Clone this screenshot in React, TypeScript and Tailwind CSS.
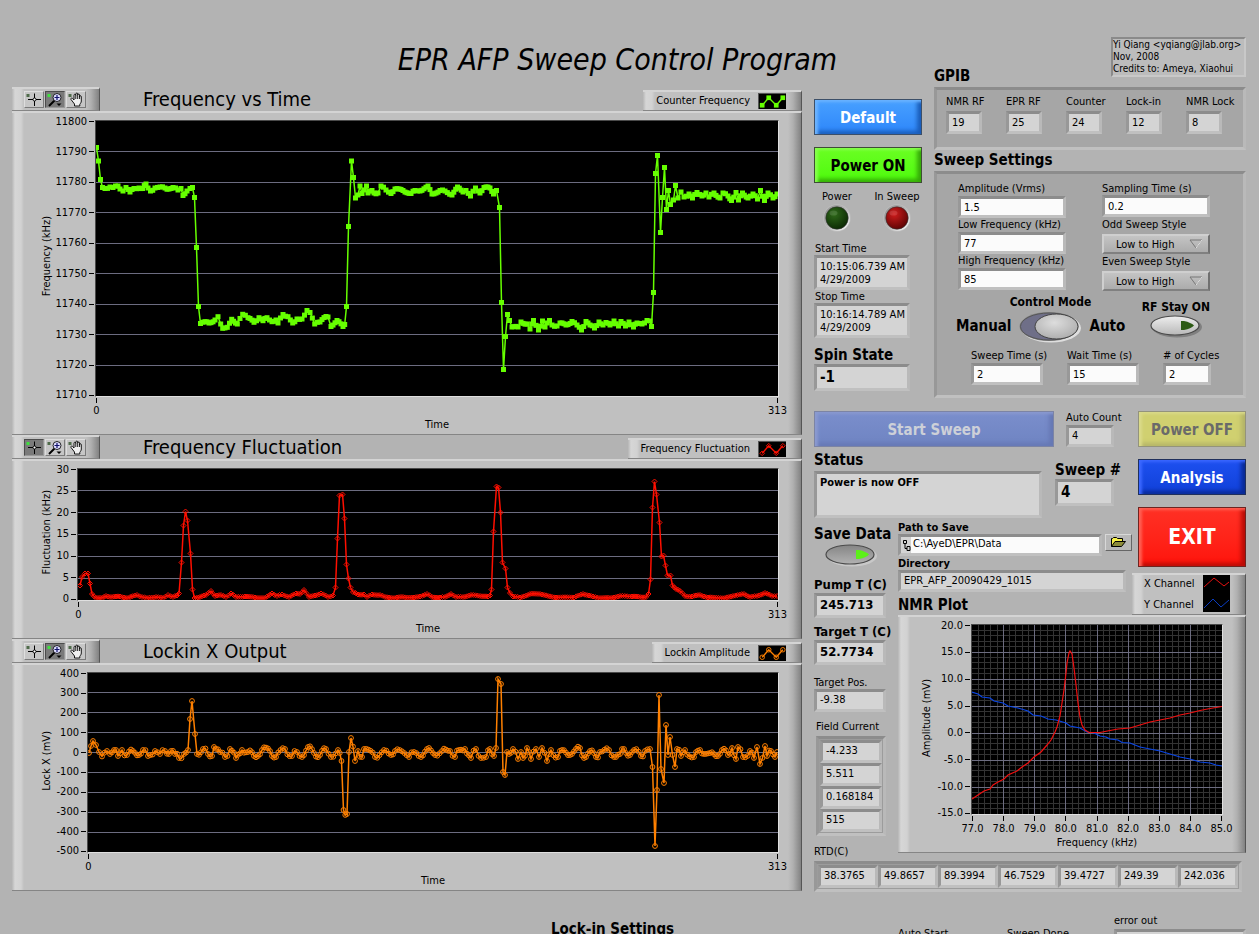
import { useId } from "react";
import type { ReactNode } from "react";

type Point = [number, number];
type Marker = "square" | "diamond" | "circle" | "none";

const parse = (s: string): Point[] =>
  s
    .trim()
    .split(/\s+/)
    .map((p) => p.split(",").map(Number) as Point);

// Fills long steps with extra samples so the trace has a constant sample rate
const resample = (points: Point[], jitter: number): Point[] => {
  const out: Point[] = [points[0]];
  for (let i = 1; i < points.length; i++) {
    const [x0, y0] = points[i - 1];
    const [x1, y1] = points[i];
    const steps = Math.max(1, Math.round((x1 - x0) / 2.2));
    for (let k = 1; k <= steps; k++) {
      const t = k / steps;
      const noise = k < steps ? Math.sin((x0 + k) * 12.9898) * jitter : 0;
      out.push([x0 + (x1 - x0) * t, y0 + (y1 - y0) * t + noise]);
    }
  }
  return out;
};

const FREQUENCY = parse(`
  96.5,147.5 98.5,161 100.5,179.5 102.5,187.5 105,188.5 110,187 113,187.5 118,186 120,189 123,191 126,187.5 130,192
  134,188.5 139,188 142.5,188.5 146,184 148,188 150.5,191 155,188 160,187 165,188 169,189 173,187.5 178,190 181,188.5
  183,195.5 187,191 190,188.5 192.5,187.5 194.5,197.5 196.5,247.5 198.5,306.5 200.5,323.5 205,321.7 209,323 215,320
  218,316.7 220.7,324 222.7,328.3 227.3,327.3 231.7,319.3 237.3,324 242.7,314.3 248,317.7 254,322.3 259,317.7 263,320.7
  267,317.7 272,321.7 276,320 278,323 283,314.5 288,316.7 292.7,323 297,319 302,319 307,310.5 310,312.5 314.7,324
  320,322 326,316.5 328,317 331,326.5 337,320.5 343,326.5 344.7,324.5 346.5,306.5 348.5,226.5 351.5,161 353.5,177.5
  355.5,198 358,195 360,186 362,193.5 366.5,186 368,193 372,190.5 374,193 378,193 381,186 386,190 391,193.5 395,189
  403,190.5 411,193.5 415,190.5 420,191 428,186 432,194 440,190.5 445,191 452,195 457.5,187 463,192 466,190.5
  470.5,196 475.5,188 480,193 484,187.5 490,188 493.5,194 496.5,190.5 499.5,207.5 501.5,302.5 503.5,369.5 505.5,336.5
  507.5,314.5 509.5,320.5 512,327 518,327 521,322 527,324 530,329 533.5,320.5 538.5,330 542.5,321 545,327 549.5,320.5
  552,325 557,326 560,323 566,325 572,321.5 577,325 581.5,330 586,321.5 590,325 594.5,328 599,322 603,325 606,322.5
  610,325 614,321 618.5,326 621,321.5 625.5,326 629,322 633.5,327 637,323 642,324 647,320.5 650,321 651.5,326.5
  653.5,292.5 655.5,173.5 657.5,155.5 660.5,232.5 662.5,197.5 664.5,167.5 666.5,209.5 668.5,190.5 670.5,204.5 673.5,200
  675.5,185.5 678,198 681,192 684,197 689,194 692.5,198 697,192.5 702,196 706,193 709,197 714,193 720,198 723,193
  728,196 731.5,200.5 736,192.5 738.5,200 742.5,193 748,198 753,194 757.5,199 760.5,190.5 764.5,200.5 768,193 773,198 777,194
`);

const FLUCTUATION = parse(`
  80,585.5 82,577 85,573.5 88,573.5 90,583.5 92,594 96,598 102,598 106,596 112,597 120,596.5 128,598 137,595 142,597
  147,598 156,597 163,598 168,595 173,597 177,595.5 179,593.5 181.5,562.5 183.5,525.5 185.5,511.5 187.5,520.5
  190.5,553.5 192.5,589.5 194.5,598 200,597 206,595 211,591 215,596 221,595 226,597 231,593.5 236,597 245,596.5
  255,597.5 265,598 272,593.5 277,596 282,594.5 289,597 296,593.5 300,594 304,590 309,597 315,595.5 321,593.5 328,597
  333,595.5 335.5,587.5 337.5,538.5 339.5,495.5 342.5,494.5 344.5,518.5 346.5,564.5 348.5,578.5 350.5,587.5 353,592
  358,594.5 364,594.5 367,597 372,594.5 380,595 385,597 395,598 403,597 414,597.5 420,596.5 427,594 432,597 440,597.5
  445,597 451,594 456,597 463,597 471,595 480,596 488,596.5 490,595.5 491.5,589.5 493.5,531.5 496.5,486.5 498.5,487.5
  500.5,512.5 502.5,562.5 505.5,568.5 507.5,587.5 510,593 513,596.5 520,597.5 530,594 540,594 548,596 556,597.5
  574,597.5 583,594 593,596.5 600,598 610,598 620,596 632,596.5 640,597 646,597 648.5,594 650.5,579.5 652.5,507.5
  654.5,481.5 656.5,494.5 659.5,522.5 661.5,556.5 663.5,555.5 665.5,565.5 667.5,575.5 670.5,575.5 672.5,585.5 676,589
  680,591 685,596 692,596.5 700,595 708,597.5 725,598 733,596 744,594 750,597 757,596 765,593 772,596 777,596
`);

const LOCKIN = parse(`
  89,753 91,746 93,741 96,745 99,752 102,756.5 107,751 110,754 114,750 118,756 122,750 127,755 133,751 139,755 143,750
  148,756 155,751 160,754 165,751 171,751 175,754 179,758 184,754 188,750 190,719 192,701 195,734 197,754 203,749
  208,754 212,756 214,747 220,752 225,757 230,749 236,758 242,750 248,752 254,756 262,750 270,751 276,757 285,749
  292,756 297,752 302,757 308,747 314,753 320,755 326,749 331,757 338,750 341.5,761 343.5,810 347,814 349,752 351,738
  355,761 358,751 362,757 364,749 375,757 384,750 391,755 395,751 409,757 414,752 421,757 427,749 435,755 442,751
  450,751 455,757 459,750 465,749 471,758 476,749 481,758 486,757 490,749 494,756 496,748 498,679 501,684 503,772
  505,775 507,752 513,749 518,759 521,752 523,758 527,748 531,759 536,749 539,757 542,748 547,761 551,750 558,757
  562,750 570,755 580,748 584,758 590,751 596,757 600,752 609,750 614,757 620,754 624,749 630,755 634,750 641,756
  645,751 650,749 652.5,767 655,846 657,790 659,695 661,769 664,783 666,725 668,755 670,737 675,767 677,749 681,756
  685,750 694,757 700,750 710,753 718,756 722,750 728,755 732,748 736,759 738,747 743,757 750,751 754,758 757,747
  760,764 765,746 767,756 771,751 775,757 777,752
`);

const NMR_X = parse(`
  972,799 978,795 984,791 990,789 993,785 998,782 1004,779 1008,775 1017,771 1022,767 1028,763 1034,757 1041,752
  1047,745 1051,740 1055,732 1057,727 1060,716 1062,703 1064,690 1066,673 1067,663 1069,653 1070,651 1072,654
  1074,668 1076,685 1078,703 1080,717 1082,725 1085,730 1089,732.5 1100,732.5 1110,730.5 1118,729 1130,728 1140,725
  1150,722 1160,720 1170,718 1180,715 1190,713 1200,710.5 1210,708.5 1222,706.5
`);

const NMR_Y = parse(`
  972,692 978,694 982,697 990,698 994,701 1003,703 1008,706 1018,708 1028,711 1033,715 1041,716 1048,719 1056,720
  1066,723 1070,726 1080,728 1087,732 1094,733 1100,736 1106,737 1110,739 1118,740 1122,742.5 1130,743 1140,747
  1150,749 1160,751 1170,754 1180,757 1190,759 1200,762 1210,763 1216,765 1222,766
`);

const BEVEL =
  "border-t-2 border-r border-b border-t-[#d4d4d4] border-r-[#555] border-b-[#858585] bg-[linear-gradient(to_right,#b6b6b6,#d6d6d6_3px,#d2d2d2_9px,#c0c0c0_12px,#c0c0c0_calc(100%_-_13px),#b0b0b0_calc(100%_-_8px),#828282)]";
const SUNKEN =
  "border-[3px] border-t-[#8c8c8c] border-l-[#989898] border-r-[#b9b9b9] border-b-[#c0c0c0]";

function Trace({ points, color, marker }: { points: Point[]; color: string; marker: Marker }) {
  return (
    <g fill="none" stroke={color}>
      <polyline points={points.map((p) => p.join(",")).join(" ")} strokeWidth={marker === "none" ? 1.2 : 1.5} />
      {points.map(([x, y], i) => {
        if (marker === "square") return <rect key={i} x={x - 2.5} y={y - 2.5} width={5} height={5} fill={color} stroke="none" />;
        if (marker === "diamond") return <path key={i} d={`M${x - 2.5} ${y}l2.500 -2.500l2.500 2.500l-2.500 2.500z`} strokeWidth={1} />;
        if (marker === "circle") return <circle key={i} cx={x} cy={y} r={2.4} strokeWidth={1} />;
        return null;
      })}
    </g>
  );
}

function Chart({
  box,
  height,
  axis,
  labelGap,
  yLabel,
  yTicks,
  xLabel,
  xTicks,
  fineGrid = false,
  children,
}: {
  box: [number, number, number, number];
  height: string;
  axis: string;
  labelGap: string;
  yLabel: string;
  yTicks: string[];
  xLabel: string;
  xTicks: string[];
  fineGrid?: boolean;
  children: ReactNode;
}) {
  const [x, y, w, h] = box;
  const rows = yTicks.length - 1;
  const cols = xTicks.length - 1;
  const line = (n: number, total: number) => Array.from({ length: total - 1 }, (_, i) => ((i + 1) * n) / total);
  return (
    <div className={`${BEVEL} flex pt-[7px] pr-[22px] pb-[3px]`}>
      <div className={`${labelGap} flex w-3 shrink-0 items-center justify-center pb-[38px]`}>
        <span className="rotate-180 whitespace-nowrap leading-3 [writing-mode:vertical-rl]">{yLabel}</span>
      </div>
      <div className={`${axis} ${height} flex shrink-0 flex-col justify-between py-px`}>
        {yTicks.map((t) => (
          <div key={t} className="flex h-px items-center justify-end gap-0.5 pr-px leading-3">
            <span>{t}</span>
            <span className="h-px w-[5px] bg-black" />
          </div>
        ))}
      </div>
      <div className="min-w-0 flex-1">
        <div className={`${height} border border-t-[#4a4a4a] border-r-[#e0e0e0] border-b-[#e0e0e0] border-l-[#4a4a4a] bg-black`}>
          <svg viewBox={box.join(" ")} preserveAspectRatio="none" className="block h-full w-full">
            {fineGrid && (
              <g stroke="#333" shapeRendering="crispEdges">
                {line(h, rows * 5).map((v) => (
                  <line key={`r${v}`} x1={x} x2={x + w} y1={y + v} y2={y + v} />
                ))}
                {line(w, cols * 5).map((v) => (
                  <line key={`c${v}`} x1={x + v} x2={x + v} y1={y} y2={y + h} />
                ))}
              </g>
            )}
            <g stroke="#6c6c80" shapeRendering="crispEdges">
              {line(h, rows).map((v) => (
                <line key={`r${v}`} x1={x} x2={x + w} y1={y + v} y2={y + v} />
              ))}
              {fineGrid && line(w, cols).map((v) => <line key={`c${v}`} x1={x + v} x2={x + v} y1={y} y2={y + h} />)}
            </g>
            {children}
          </svg>
        </div>
        <div className="mx-px mt-px flex justify-between">
          {xTicks.map((t) => (
            <div key={t} className="flex w-px flex-col items-center">
              <span className="h-[5px] w-px bg-black" />
              <span className="mt-0.5 leading-3">{t}</span>
            </div>
          ))}
        </div>
        <div className="mt-0.5 text-center leading-3">{xLabel}</div>
      </div>
    </div>
  );
}

function ToolButton({ name, active, children }: { name: string; active?: boolean; children: ReactNode }) {
  return (
    <button
      type="button"
      aria-label={name}
      className={
        active
          ? "h-[17px] w-5 border border-t-[#4c4c4c] border-l-[#4c4c4c] border-r-[#999] border-b-[#999] bg-[#7a7a7a]"
          : "h-[17px] w-5 border border-t-[#dedede] border-l-[#dedede] border-r-[#7a7a7a] border-b-[#7a7a7a] bg-[#c6c6c6]"
      }
    >
      <svg viewBox="0 0 18 15" className="block h-[15px] w-[18px]">
        <rect x="1.500" y="2" width="3" height="3" fill={active ? "#3fe03f" : "#4f6b4a"} />
        {children}
      </svg>
    </button>
  );
}

function ToolPalette({ active }: { active: "cursor" | "zoom" }) {
  return (
    <div className={`${BEVEL} flex h-6 w-[88px] gap-px pt-0.5 pl-3`}>
      <ToolButton name="Cursor" active={active === "cursor"}>
        <path d="M3 7.500h5M11 7.500h5M9.500 1.500v4.500M9.500 9v5" stroke="#000" />
        <circle cx="9.500" cy="7.500" r="1.500" fill="#fff" stroke="#000" />
      </ToolButton>
      <ToolButton name="Zoom" active={active === "zoom"}>
        <path d="M8.500 8.500L3 14" stroke="#000" strokeWidth="2" />
        <circle cx="11" cy="5.500" r="4" fill="#dcdcff" stroke="#222" />
        <path d="M11 3v5M8.500 5.500h5" stroke="#10106a" strokeWidth="1.200" />
        <path d="M10.500 11.500h5l-2.500 2.500z" fill="#000" />
      </ToolButton>
      <ToolButton name="Pan" active={false}>
        <path
          d="M7.500 14v-2L4 7.500c-.7-1 .8-2 1.700-1L7 8V3.200c0-1.300 1.800-1.300 1.800 0V2c0-1.200 1.900-1.200 1.900 0v1c0-1.200 1.900-1.200 1.900 0v1.600c0-1.100 1.700-1.100 1.700 0V9c0 1.500-.8 2.300-1.500 3.300V14z"
          fill="#f0f0f0"
          stroke="#000"
          strokeWidth=".9"
        />
        <path d="M8.800 3v4M10.700 3v4M12.600 4v3" stroke="#000" strokeWidth=".9" />
      </ToolButton>
    </div>
  );
}

function GraphHeader({ title, active, legend, children }: { title: string; active: "cursor" | "zoom"; legend: string; children: ReactNode }) {
  return (
    <div className="flex h-6 items-end">
      <ToolPalette active={active} />
      <h2 className="ml-[43px] flex-1 self-center text-[20px] leading-6">{title}</h2>
      <div className={`${BEVEL} flex h-[21px] items-center gap-2 pr-[15px] pl-[13px]`}>
        <span className="leading-3">{legend}</span>
        <svg viewBox="0 0 28 16" className="h-4 w-7 border-t border-l border-[#555] bg-black">
          {children}
        </svg>
      </div>
    </div>
  );
}

const SWATCH: Point[] = [[3, 12], [10, 4], [18, 12], [25, 4]];

function Field({
  label,
  value,
  width,
  size = "h-[22px]",
  labelClass = "leading-[13px]",
  gap = "mt-px",
}: {
  label: string;
  value: string;
  width: string;
  size?: string;
  labelClass?: string;
  gap?: string;
}) {
  const id = useId();
  return (
    <div className={width}>
      <label htmlFor={id} className={`block whitespace-nowrap ${labelClass}`}>
        {label}
      </label>
      <input id={id} defaultValue={value} className={`${SUNKEN} ${size} ${gap} block w-full bg-[#fbfbfb] px-[3px] pt-px outline-none`} />
    </div>
  );
}

function Readout({
  label,
  value,
  width,
  size = "h-[22px]",
  labelClass = "leading-[13px]",
  valueClass = "items-center px-[3px] pt-px",
  gap = "",
}: {
  label: string;
  value: ReactNode;
  width: string;
  size?: string;
  labelClass?: string;
  valueClass?: string;
  gap?: string;
}) {
  const id = useId();
  return (
    <div className={width}>
      <label htmlFor={id} className={`block whitespace-nowrap ${labelClass}`}>
        {label}
      </label>
      <output id={id} className={`${SUNKEN} ${size} ${gap} ${valueClass} flex bg-[#d4d4d4]`}>
        {value}
      </output>
    </div>
  );
}

function Combo({ label }: { label: string }) {
  const id = useId();
  return (
    <div>
      <label htmlFor={id} className="block leading-[13px]">
        {label}
      </label>
      <div className="relative mt-[3px]">
        <select
          id={id}
          className="block h-5 w-full appearance-none border-2 border-t-[#cfcfcf] border-l-[#cfcfcf] border-r-[#707070] border-b-[#808080] bg-linear-to-b from-[#c4c4c4] to-[#acacac] pt-px pl-3 outline-none"
        >
          <option>Low to High</option>
          <option>High to Low</option>
        </select>
        <svg viewBox="0 0 14 10" className="pointer-events-none absolute top-[5px] right-[7px] h-2.5 w-3.5" fill="none">
          <path d="M1 1h12L7 9z" stroke="#777" />
          <path d="M13 1L7 9" stroke="#e8e8e8" />
        </svg>
      </div>
    </div>
  );
}

function PanelButton({ className, disabled, children }: { className: string; disabled?: boolean; children: ReactNode }) {
  return (
    <button type="button" disabled={disabled} className={`border pt-0.5 font-bold ${className}`}>
      {children}
    </button>
  );
}

function Led({ label, id, light, dark }: { label: string; id: string; light: string; dark: string }) {
  return (
    <div className="flex w-[46px] flex-col items-center">
      <span className="whitespace-nowrap leading-[13px]">{label}</span>
      <svg viewBox="0 0 28 28" className="mt-px h-7 w-7">
        <defs>
          <radialGradient id={id} cx=".38" cy=".32" r=".7">
            <stop offset="0" stopColor={light} />
            <stop offset="1" stopColor={dark} />
          </radialGradient>
          <linearGradient id={`${id}-rim`} x1="0" y1="0" x2="1" y2="1">
            <stop offset="0" stopColor="#8c8c8c" />
            <stop offset=".5" stopColor="#b8b8b8" />
            <stop offset="1" stopColor="#fff" />
          </linearGradient>
        </defs>
        <circle cx="14" cy="14" r="13.800" fill="#bdbdbd" />
        <circle cx="14" cy="14" r="13" fill={`url(#${id}-rim)`} />
        <circle cx="14" cy="14" r="11.200" fill={`url(#${id})`} stroke="#333" strokeWidth=".6" />
        <ellipse cx="10.500" cy="9" rx="4" ry="2.600" fill="#fff" opacity=".12" />
      </svg>
    </div>
  );
}

function OvalSwitch({ name, id, on }: { name: string; id: string; on: boolean }) {
  return (
    <button type="button" role="switch" aria-checked={on} aria-label={name} className="block h-6 w-[54px]">
      <svg viewBox="0 0 54 24" className="h-6 w-[54px]">
        <defs>
          <linearGradient id={id} x1="0" y1="0" x2="0" y2="1">
            <stop offset="0" stopColor={on ? "#858585" : "#eee"} />
            <stop offset="1" stopColor={on ? "#b2b2b2" : "#b8b8b8"} />
          </linearGradient>
        </defs>
        <ellipse cx="28" cy="13" rx="25" ry="10.500" fill={on ? "#c8c8c8" : "#808080"} />
        <ellipse cx="26" cy="11.500" rx="24" ry="9.500" fill={`url(#${id})`} stroke="#4a4a4a" strokeWidth="1.200" />
        <path d="M32 7h3q7 1.500 10 4.500q-3 3-10 4.500h-3z" fill={on ? "#5cf01a" : "#2c5a14"} />
      </svg>
    </button>
  );
}

function ModeSwitch() {
  return (
    <button type="button" role="switch" aria-checked="true" aria-label="Control Mode" className="block h-8 w-[62px]">
      <svg viewBox="0 0 62 32" className="h-8 w-[62px]">
        <defs>
          <radialGradient id="knob" cx=".45" cy=".35" r=".7">
            <stop offset="0" stopColor="#ddd" />
            <stop offset="1" stopColor="#ababab" />
          </radialGradient>
        </defs>
        <ellipse cx="32" cy="17" rx="30" ry="14.500" fill="#dedede" />
        <ellipse cx="30" cy="15.500" rx="29.500" ry="14.500" fill="#858585" />
        <ellipse cx="30" cy="15.500" rx="28.500" ry="13.500" fill="#6f6f88" stroke="#555" />
        <ellipse cx="37.500" cy="15.500" rx="21.500" ry="12.500" fill="url(#knob)" stroke="#444" />
      </svg>
    </button>
  );
}

const GPIB = [
  ["NMR RF", "19"],
  ["EPR RF", "25"],
  ["Counter", "24"],
  ["Lock-in", "12"],
  ["NMR Lock", "8"],
];
const FIELD_CURRENT = ["-4.233", "5.511", "0.168184", "515"];
const RTD = ["38.3765", "49.8657", "89.3994", "46.7529", "39.4727", "249.39", "242.036"];

function Graphs() {
  const green = "#66ff00";
  const red = "#ff0f00";
  const orange = "#ff8000";
  return (
    <section>
      <GraphHeader title="Frequency vs Time" active="zoom" legend="Counter Frequency">
        <Trace points={SWATCH} color={green} marker="square" />
      </GraphHeader>
      <Chart
        box={[96, 121, 682, 275]}
        height="h-[277px]"
        labelGap="ml-[29px]"
        axis="w-[42px]"
        yLabel="Frequency (kHz)"
        yTicks={["11800", "11790", "11780", "11770", "11760", "11750", "11740", "11730", "11720", "11710"]}
        xLabel="Time"
        xTicks={["0", "313"]}
      >
        <Trace points={resample(FREQUENCY, 0.8)} color={green} marker="square" />
      </Chart>
      <GraphHeader title="Frequency Fluctuation" active="cursor" legend="Frequency Fluctuation">
        <Trace points={SWATCH} color={red} marker="diamond" />
      </GraphHeader>
      <Chart
        box={[78, 469, 700, 131]}
        height="h-[133px]"
        labelGap="ml-[29px]"
        axis="w-6"
        yLabel="Fluctuation (kHz)"
        yTicks={["30", "25", "20", "15", "10", "5", "0"]}
        xLabel="Time"
        xTicks={["0", "313"]}
      >
        <Trace points={resample(FLUCTUATION, 0.3)} color={red} marker="diamond" />
      </Chart>
      <GraphHeader title="Lockin X Output" active="zoom" legend="Lockin Amplitude">
        <Trace points={SWATCH} color={orange} marker="circle" />
      </GraphHeader>
      <Chart
        box={[88, 673, 690, 179]}
        height="h-[181px]"
        labelGap="ml-[29px]"
        axis="w-[34px]"
        yLabel="Lock X (mV)"
        yTicks={["400", "300", "200", "100", "0", "-100", "-200", "-300", "-400", "-500"]}
        xLabel="Time"
        xTicks={["0", "313"]}
      >
        <Trace points={resample(LOCKIN, 3)} color={orange} marker="circle" />
      </Chart>
    </section>
  );
}

function Controls() {
  return (
    <div className="flex w-[108px] flex-col pt-3">
      <PanelButton className="h-9 border-[#3c4f68] bg-linear-to-b from-[#48a0ff] to-[#2d86fa] text-[15px] text-white shadow-[inset_3px_2px_3px_#6cb4ff,inset_-4px_-3px_4px_#1a5cb8]">
        Default
      </PanelButton>
      <PanelButton className="mt-3 h-9 border-[#3e4e34] bg-linear-to-b from-[#6aff22] to-[#4dfa0a] text-[15px] shadow-[inset_3px_2px_3px_#86ff4c,inset_-4px_-3px_4px_#35a808]">
        Power ON
      </PanelButton>
      <div className="mt-[7px] flex gap-3.5">
        <Led label="Power" id="led-power" light="#2f6a1a" dark="#0c2a04" />
        <Led label="In Sweep" id="led-sweep" light="#d01c1c" dark="#5e0404" />
      </div>
      <Readout
        label="Start Time"
        width="mt-2.5 w-24"
        size="h-[35px]"
        labelClass="pl-px leading-[13px]"
        valueClass="flex-col justify-center pl-[3px] leading-[13px] whitespace-nowrap"
        value={
          <>
            <span>10:15:06.739 AM</span>
            <span>4/29/2009</span>
          </>
        }
      />
      <Readout
        label="Stop Time"
        width="w-24"
        size="h-[35px]"
        labelClass="pl-px leading-[13px]"
        valueClass="flex-col justify-center pl-[3px] leading-[13px] whitespace-nowrap"
        value={
          <>
            <span>10:16:14.789 AM</span>
            <span>4/29/2009</span>
          </>
        }
      />
      <Readout
        label="Spin State"
        value="-1"
        width="mt-2 w-24"
        size="h-[27px]"
        labelClass="text-[15px] font-bold leading-[18px]"
        valueClass="items-center px-[3px] text-[15px] font-bold"
      />
    </div>
  );
}

function Settings() {
  return (
    <div className="-mt-5 min-w-0 flex-1">
      <h3 className="text-[15px] leading-[18px] font-bold">GPIB</h3>
      <div className={`${SUNKEN} mt-0.5 flex gap-3 bg-[#a6a6a6] px-[9px] pt-[5px] pb-[13px]`}>
        {GPIB.map(([label, value]) => (
          <div key={label} className="w-12">
            <Readout label={label} value={value} width="w-9" size="h-[23px]" gap="mt-[3px]" />
          </div>
        ))}
      </div>
      <h3 className="mt-px text-[15px] leading-[18px] font-bold">Sweep Settings</h3>
      <div className={`${SUNKEN} mt-0.5 bg-[#a6a6a6] pt-2 pb-[10px]`}>
        <div className="mr-[33px] ml-[21px] grid grid-cols-2 gap-x-9">
          <div>
            <Field label="Amplitude (Vrms)" value="1.5" width="w-full" />
            <Field label="Low Frequency (kHz)" value="77" width="w-full" />
            <Field label="High Frequency (kHz)" value="85" width="w-full" />
          </div>
          <div className="flex flex-col gap-px">
            <Field label="Sampling Time (s)" value="0.2" width="w-full" gap="" />
            <Combo label="Odd Sweep Style" />
            <Combo label="Even Sweep Style" />
          </div>
        </div>
        <div className="mt-1 mr-[33px] ml-[19px] flex items-end justify-between">
          <div className="flex items-end gap-2 text-[15px] font-bold">
            <span className="pb-2 leading-[18px]">Manual</span>
            <div className="flex w-[62px] flex-col items-center">
              <span className="mb-0.5 text-[12px] leading-[14px] whitespace-nowrap">Control Mode</span>
              <ModeSwitch />
            </div>
            <span className="pb-2 leading-[18px]">Auto</span>
          </div>
          <div className="mb-[5px] flex flex-col items-center">
            <span className="text-[12px] leading-[14px] font-bold whitespace-nowrap">RF Stay ON</span>
            <OvalSwitch name="RF Stay ON" id="rf-stay" on={false} />
          </div>
        </div>
        <div className="mt-[6px] ml-[34px] flex gap-6">
          <Field label="Sweep Time (s)" value="2" width="w-[72px]" />
          <Field label="Wait Time (s)" value="15" width="w-[72px]" />
          <Field label="# of Cycles" value="2" width="w-12" />
        </div>
      </div>
    </div>
  );
}

function DataColumn() {
  const id = useId();
  return (
    <div className="row-span-2 flex flex-col pt-[5px]">
      <span className="text-[15px] leading-[18px] font-bold whitespace-nowrap">Save Data</span>
      <div className="ml-2.5">
        <OvalSwitch name="Save Data" id="save-data" on />
      </div>
      <Readout
        label="Pump T (C)"
        value="245.713"
        width="mt-[10px] w-[72px]"
        size="h-[25px]"
        labelClass="text-[13px] font-bold leading-4"
        valueClass="items-center px-[3px] text-[13px] font-bold"
      />
      <Readout
        label="Target T (C)"
        value="52.7734"
        width="mt-1.5 w-[72px]"
        size="h-[25px]"
        labelClass="text-[13px] font-bold leading-4"
        valueClass="items-center px-[3px] text-[13px] font-bold"
      />
      <Readout label="Target Pos." value="-9.38" width="mt-[11px] w-[72px]" size="h-[23px]" />
      <span id={id} className="mt-2 ml-0.5 leading-[13px] whitespace-nowrap">
        Field Current
      </span>
      <div role="group" aria-labelledby={id} className={`${SUNKEN} mt-[3px] ml-0.5 w-[70px] bg-[#9c9c9c] p-px`}>
        {FIELD_CURRENT.map((v) => (
          <output key={v} className={`${SUNKEN} flex h-[23px] items-center bg-[#d4d4d4] px-[3px] pt-px`}>
            {v}
          </output>
        ))}
      </div>
      <span className="mt-[9px] leading-[13px]">RTD(C)</span>
    </div>
  );
}

function Files() {
  const id = useId();
  return (
    <div className="pt-px">
      <label htmlFor={id} className="block leading-[13px] font-bold">
        Path to Save
      </label>
      <div className="flex items-start gap-[3px]">
        <div className={`${SUNKEN} flex h-[22px] w-[204px] bg-[#fbfbfb]`}>
          <svg viewBox="0 0 10 16" className="h-4 w-2.5 shrink-0 bg-[#d4d4d4]" fill="none" stroke="#000">
            <path d="M2.500 3.500h3v3h-3zM4 6.500v5h2M6 9.500h3v4h-3z" />
          </svg>
          <input id={id} defaultValue="C:\AyeD\EPR\Data" className="min-w-0 flex-1 px-0.5 outline-none" />
        </div>
        <button
          type="button"
          aria-label="Browse"
          className="h-[17px] w-[27px] border border-t-[#d8d8d8] border-l-[#d8d8d8] border-r-[#666] border-b-[#666] bg-[#b8b8b8]"
        >
          <svg viewBox="0 0 25 15" className="h-[15px] w-[25px]" stroke="#000">
            <path d="M5.500 11.500v-8h1l1-1h3l1 1h5v3" fill="#f6f04a" />
            <path d="M5.500 11.500l3.500-5h10.500l-4 5z" fill="#8c8c3a" />
          </svg>
        </button>
      </div>
      <Readout label="Directory" value="EPR_AFP_20090429_1015" width="mt-px w-[228px]" labelClass="font-bold leading-[13px]" />
      <h3 className="mt-1 text-[15px] leading-[18px] font-bold">NMR Plot</h3>
    </div>
  );
}

function NmrPlot() {
  return (
    <div className="col-span-2 self-start">
      <Chart
        box={[972, 625, 250, 189]}
        height="h-[191px]"
        labelGap="ml-[23px]"
        axis="w-[38px]"
        yLabel="Amplitude (mV)"
        yTicks={["20.0", "15.0", "10.0", "5.0", "0.0", "-5.0", "-10.0", "-15.0"]}
        xLabel="Frequency (kHz)"
        xTicks={["77.0", "78.0", "79.0", "80.0", "81.0", "82.0", "83.0", "84.0", "85.0"]}
        fineGrid
      >
        <Trace points={NMR_Y} color="#0a46e6" marker="none" />
        <Trace points={NMR_X} color="#f01010" marker="none" />
      </Chart>
    </div>
  );
}

export default function App() {
  return (
    <div className="h-screen w-full overflow-hidden bg-[#b3b3b3] font-['DejaVu_Sans_Condensed','DejaVu_Sans',sans-serif] text-[11px] text-black">
      <header className="flex h-[87px] justify-end gap-[274px] pt-[37px] pr-[13px]">
        <h1 className="text-[30px] leading-[46px] whitespace-nowrap italic">EPR AFP Sweep Control Program</h1>
        <div className="h-10 w-[135px] border-2 border-t-[#8a8a8a] border-r-[#c8c8c8] border-b-[#c8c8c8] border-l-[#8a8a8a] bg-[#bcbcbc] text-[10px] leading-3 whitespace-nowrap">
          <p>Yi Qiang &lt;yqiang@jlab.org&gt;</p>
          <p>Nov, 2008</p>
          <p>Credits to: Ameya, Xiaohui</p>
        </div>
      </header>

      <main className="grid grid-cols-[minmax(0,1fr)_432px] gap-3 pr-[13px] pl-3">
        <Graphs />
        <section>
          <div className="flex gap-3">
            <Controls />
            <Settings />
          </div>

          <div className="mt-[13px] flex">
            <PanelButton
              disabled
              className="h-9 flex-1 border-[#7c84a4] bg-linear-to-b from-[#7a8ecc] to-[#6f84c2] text-[15px] text-[#cdd0d8] shadow-[inset_3px_2px_3px_#8a9ad0,inset_-4px_-3px_4px_#6678b4]"
            >
              Start Sweep
            </PanelButton>
            <Readout label="Auto Count" value="4" width="ml-3 w-12" gap="mt-px" />
            <PanelButton
              disabled
              className="ml-6 h-9 w-[108px] border-[#93937c] bg-[#d0d070] text-[15px] text-[#6a6a6a] shadow-[inset_3px_2px_3px_#dada8a,inset_-4px_-3px_4px_#b4b468]"
            >
              Power OFF
            </PanelButton>
          </div>

          <div className="grid grid-cols-[84px_minmax(0,1fr)_114px] grid-rows-[auto_auto_1fr]">
            <div className="col-span-2 flex gap-[13px]">
              <Readout
                label="Status"
                value="Power is now OFF"
                width="w-[228px] pt-1"
                size="h-[47px]"
                gap="mt-0.5"
                labelClass="text-[15px] font-bold leading-[18px]"
                valueClass="items-start px-[3px] pt-0.5 font-bold leading-[14px]"
              />
              <Readout
                label="Sweep #"
                value="4"
                width="w-[59px] pt-3.5"
                size="h-[27px]"
                labelClass="text-[15px] font-bold leading-[18px]"
                valueClass="items-center px-[3px] text-[15px] font-bold"
              />
            </div>
            <div className="row-span-2 flex flex-col items-end pt-3">
              <PanelButton className="h-9 w-[108px] border-[#20305c] bg-linear-to-b from-[#1d50f0] to-[#1040d8] text-[15px] text-white shadow-[inset_3px_2px_3px_#3c68ff,inset_-4px_-3px_4px_#0a2a94]">
                Analysis
              </PanelButton>
              <PanelButton className="mt-3 h-[60px] w-[108px] border-[#6e2420] bg-linear-to-b from-[#ff3024] to-[#ff120a] text-[21px] text-white shadow-[inset_3px_2px_3px_#ff6054,inset_-4px_-3px_4px_#b80c06]">
                EXIT
              </PanelButton>
              <div className={`${BEVEL} mt-1.5 flex h-[42px] w-full gap-2 pl-3`}>
                <div className="leading-[21px] whitespace-nowrap">
                  <p className="-mt-0.5">X Channel</p>
                  <p>Y Channel</p>
                </div>
                <svg viewBox="0 0 27 37" className="h-[37px] w-[27px] bg-black" fill="none">
                  <path d="M1 12L11 3L21 11L26 7" stroke="#e81010" />
                  <path d="M1 33L10 24L18 32L26 25" stroke="#0a3cc0" />
                </svg>
              </div>
            </div>
            <DataColumn />
            <Files />
            <NmrPlot />
          </div>

          <div className={`${SUNKEN} mt-[3px] mr-1 grid grid-cols-7 bg-[#9c9c9c] p-px`}>
            {RTD.map((v) => (
              <output key={v} className={`${SUNKEN} flex h-[23px] items-center bg-[#d4d4d4] px-[3px] pt-px`}>
                {v}
              </output>
            ))}
          </div>
        </section>
      </main>

      <footer className="flex items-start justify-between pr-[13px] pl-[551px]">
        <h3 className="mt-7 text-[15px] leading-[18px] font-bold">Lock-in Settings</h3>
        <div className="flex w-[348px] items-start">
          <span className="mt-[35px] w-[109px] leading-[13px]">Auto Start</span>
          <span className="mt-[35px] flex-1 leading-[13px]">Sweep Done</span>
          <Readout label="error out" value="" width="mt-[22px] w-[132px]" gap="mt-0.5" />
        </div>
      </footer>
    </div>
  );
}
